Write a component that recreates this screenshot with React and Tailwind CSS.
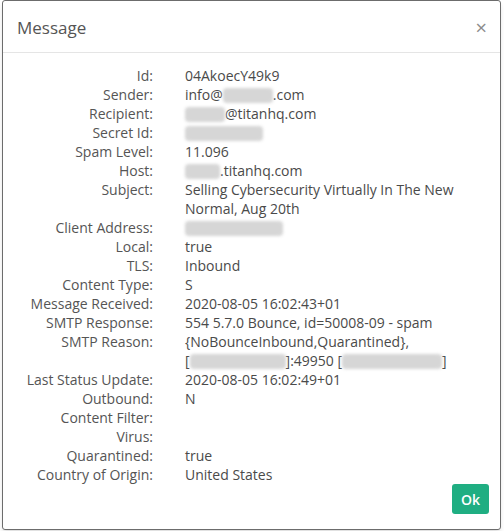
import React from "react";

const Blur = ({ w }) => (
    <span className={"inline-block align-middle h-[15px] bg-[#d6d6d6] blur-[1.5px] rounded-sm -mt-[2px]"} style={{ width: w }} />
);

const rows = [
    ["Id:", <>04AkoecY49k9</>],
    ["Sender:", <>info@<Blur w={50} />.com</>],
    ["Recipient:", <><Blur w={40} />@titanhq.com</>],
    ["Secret Id:", <Blur w={78} />],
    ["Spam Level:", <>11.096</>],
    ["Host:", <><Blur w={35} />.titanhq.com</>],
    ["Subject:", <>Selling Cybersecurity Virtually In The New Normal, Aug 20th</>],
    ["Client Address:", <Blur w={98} />],
    ["Local:", <>true</>],
    ["TLS:", <>Inbound</>],
    ["Content Type:", <>S</>],
    ["Message Received:", <>2020-08-05 16:02:43+01</>],
    ["SMTP Response:", <>554 5.7.0 Bounce, id=50008-09 - spam</>],
    ["SMTP Reason:", <>{"{NoBounceInbound,Quarantined},"}<br />[<Blur w={96} />]:49950 [<Blur w={100} />]</>],
    ["Last Status Update:", <>2020-08-05 16:02:49+01</>],
    ["Outbound:", <>N</>],
    ["Content Filter:", <></>],
    ["Virus:", <></>],
    ["Quarantined:", <>true</>],
    ["Country of Origin:", <>United States</>],
];

const App = () => {
    return (
        <div className={"w-[504px] h-[531px] bg-white pl-[2px] font-['Open_Sans',sans-serif]"}>
            <div className={"w-[499px] h-[530px] border border-[#6c6c6c] rounded-[3px] bg-white flex flex-col shadow-md"}>
                {/*Header*/}
                <div className={"h-[52px] shrink-0 border-b border-[#e5e5e5] pl-[14px] pr-[13px] pt-[3px] flex items-center justify-between"}>
                    <span className={"text-[17px] text-[#555]"}>Message</span>
                    <span className={"text-[20px] text-[#8c8c8c] leading-none"}>×</span>
                </div>

                {/*Body*/}
                <div className={"pt-[13px] pr-[14px] grid grid-cols-[150px_1fr] gap-x-[32px] text-[14px] leading-[19px] text-[#555]"}>
                    {rows.map(([label, value]) => (
                        <React.Fragment key={label}>
                            <div className={"text-right whitespace-nowrap"}>{label}</div>
                            <div className={"text-[#4a4a4a] min-h-[19px]"}>{value}</div>
                        </React.Fragment>
                    ))}
                </div>

                {/*Footer*/}
                <div className={"flex justify-end pr-[11px]"}>
                    <button className={"w-[37px] h-[30px] rounded-[3px] bg-[#1fae82] text-white text-[14px] font-semibold"}>
                        Ok
                    </button>
                </div>
            </div>
        </div>
    );
};

export default App;
